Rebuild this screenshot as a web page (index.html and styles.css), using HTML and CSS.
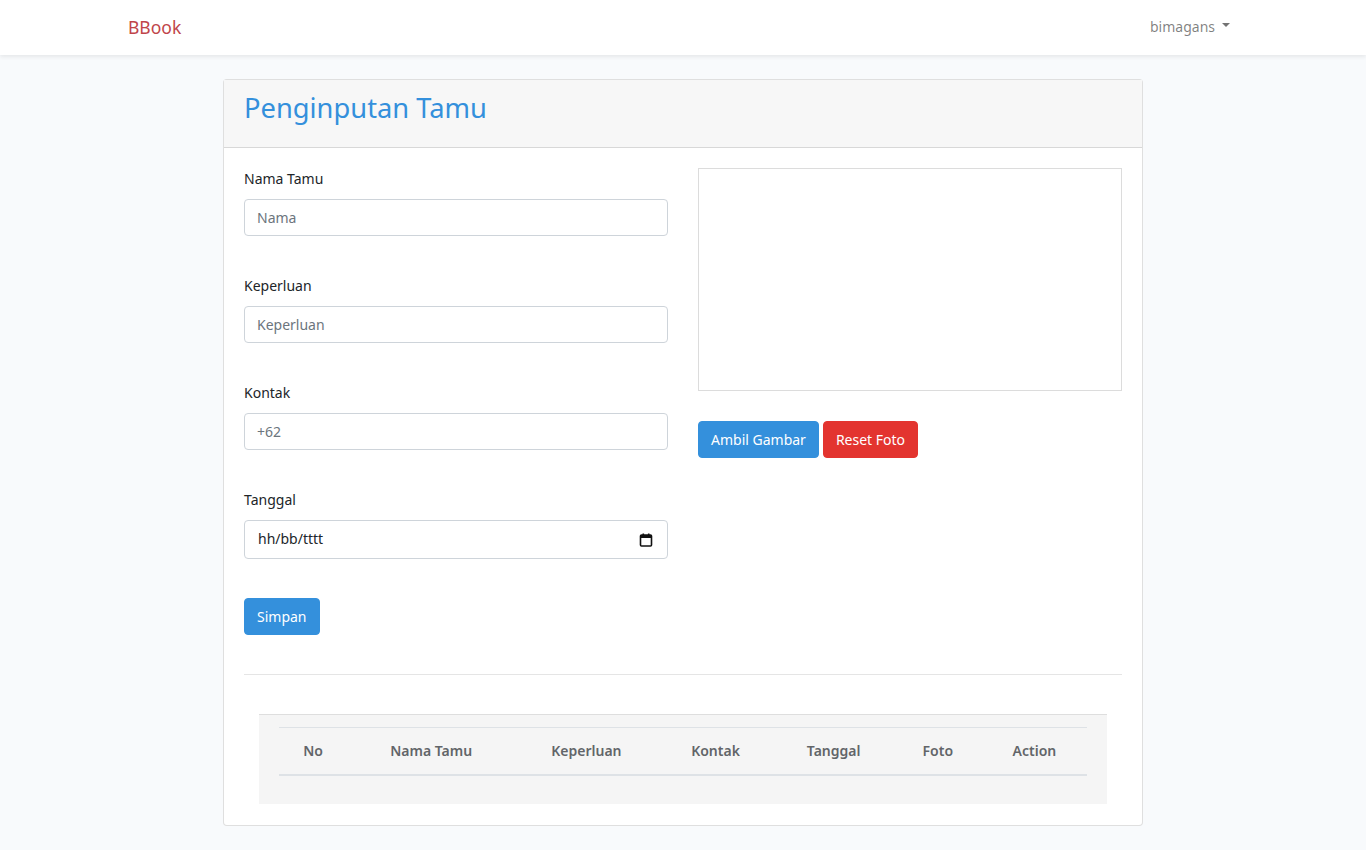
FILE: index.html
```html
<!DOCTYPE html>
<html lang="id">
<head>
<meta charset="utf-8">
<title>BBook</title>
<link rel="stylesheet" href="styles.css">
</head>
<body>
<nav class="navbar">
  <div class="container nav-inner">
    <a class="brand" href="#">BBook</a>
    <a class="user" href="#">bimagans <span class="caret"></span></a>
  </div>
</nav>
<main class="main">
  <div class="card">
    <div class="card-header"><h2 class="title">Penginputan Tamu</h2></div>
    <div class="card-body">
      <div class="row">
        <div class="col">
          <div class="group">
            <label class="label">Nama Tamu</label>
            <input class="input" type="text" placeholder="Nama">
          </div>
          <div class="group">
            <label class="label">Keperluan</label>
            <input class="input" type="text" placeholder="Keperluan">
          </div>
          <div class="group">
            <label class="label">Kontak</label>
            <input class="input" type="text" placeholder="+62">
          </div>
          <div class="group">
            <label class="label">Tanggal</label>
            <div class="input date">
              <span class="date-text">hh/bb/tttt</span>
              <svg class="cal" width="14" height="14" viewBox="0 0 14 14"><rect x="1.5" y="2" width="11" height="11" rx="1" fill="none" stroke="#111" stroke-width="1.6"/><rect x="1.5" y="2" width="11" height="3" fill="#111"/><rect x="3.5" y="0.5" width="1.6" height="2.5" fill="#111"/><rect x="8.9" y="0.5" width="1.6" height="2.5" fill="#111"/></svg>
            </div>
          </div>
          <button class="btn btn-primary">Simpan</button>
        </div>
        <div class="col">
          <div class="camera"></div>
          <div class="cam-actions">
            <button class="btn btn-primary">Ambil Gambar</button>
            <button class="btn btn-danger">Reset Foto</button>
          </div>
        </div>
      </div>
      <hr class="divider">
      <div class="table-wrap">
        <table class="table">
          <thead>
            <tr>
              <th class="c1">No</th>
              <th class="c2">Nama Tamu</th>
              <th class="c3">Keperluan</th>
              <th class="c4">Kontak</th>
              <th class="c5">Tanggal</th>
              <th class="c6">Foto</th>
              <th class="c7">Action</th>
            </tr>
          </thead>
          <tbody></tbody>
        </table>
      </div>
    </div>
  </div>
</main>
</body>
</html>
```
FILE: styles.css
```css
* { box-sizing: border-box; }
html, body { margin: 0; padding: 0; }
body {
  background: #f8fafc;
  font-family: "Noto Sans", "Nunito", sans-serif;
  font-size: 14px;
  line-height: 1.6;
  color: #212529;
}
.container { width: 1140px; margin: 0 auto; padding: 0 15px; }
.navbar {
  background: #fff;
  height: 55px;
  box-shadow: 0 .125rem .25rem rgba(0,0,0,.075);
}
.nav-inner { display: flex; align-items: center; justify-content: space-between; height: 54px; }
.brand { color: #c0454a; font-size: 17.5px; text-decoration: none; font-weight: 400; }
.user { color: rgba(0,0,0,.5); text-decoration: none; font-size: 14px; padding: 8px 8px; margin-right: 0; display: flex; align-items: center; }
.caret { display: inline-block; margin-left: 7px; border-top: 4.5px solid rgba(0,0,0,.55); border-left: 4px solid transparent; border-right: 4px solid transparent; margin-top: -3px; }
.main { padding: 24px 0 24px; }
.card {
  width: 920px;
  margin: 0 auto;
  background: #fff;
  border: 1px solid rgba(0,0,0,.125);
  border-radius: 4px;
}
.card-header {
  background: #f7f7f7;
  border-bottom: 1px solid rgba(0,0,0,.125);
  padding: 11px 20px 12px;
  height: 68px;
}
.title { margin: 0; font-weight: 400; color: #3490dc; font-size: 27.3px; line-height: 34px; }
.card-body { padding: 20px 20px 21px; }
.row { display: flex; gap: 30px; }
.col { flex: 1 1 0; min-width: 0; }
.group { margin-bottom: 39px; }
.label { display: block; line-height: 22px; margin-bottom: 9px; font-size: 14px; }
.input {
  display: block;
  width: 100%;
  height: 37px;
  padding: 6px 12px;
  font: inherit;
  font-size: 14px;
  color: #495057;
  background: #fff;
  border: 1px solid #ced4da;
  border-radius: 4px;
  outline: none;
}
.input::placeholder { color: #6c757d; }
.date { height: 39px; display: flex; align-items: center; justify-content: space-between; padding: 0 14px 0 13px; }
.date-text { color: #212529; }
.cal { display: block; }
.btn {
  font: inherit;
  font-size: 14px;
  line-height: 23px;
  padding: 6px 12px;
  border: 1px solid transparent;
  border-radius: 4px;
  color: #fff;
  cursor: pointer;
}
.btn-primary { background: #3490dc; border-color: #3490dc; }
.btn-danger { background: #e3342f; border-color: #e3342f; }
.camera { height: 223px; border: 1px solid #dcdcdc; }
.cam-actions { margin-top: 30px; display: flex; gap: 4px; }
.divider { margin: 39px 0 39px; border: 0; border-top: 1px solid rgba(0,0,0,.1); }
.table-wrap {
  margin: 0 15px;
  background: #f5f5f5;
  border-top: 1px solid #dedede;
  padding: 12px 20px 28px;
}
.table { width: 100%; border-collapse: collapse; table-layout: fixed; }
.table th {
  border-top: 1px solid #dee2e6;
  border-bottom: 2px solid #dee2e6;
  padding: 12px 0;
  font-weight: 600;
  color: #626569;
  text-align: center;
  font-size: 14px;
}
.c1 { width: 68px; }
.c2 { width: 168px; }
.c3 { width: 142px; }
.c4 { width: 116px; }
.c5 { width: 120px; }
.c6 { width: 88px; }
.c7 { width: 105px; }
```
